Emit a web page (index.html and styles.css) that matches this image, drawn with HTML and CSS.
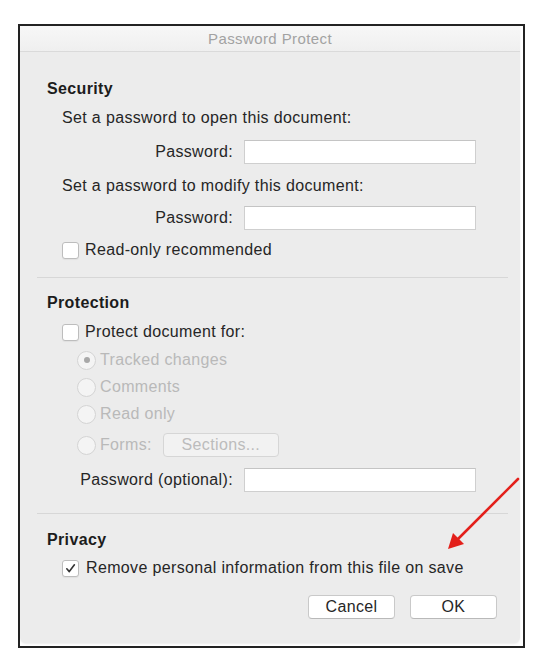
FILE: index.html
```html
<!DOCTYPE html>
<html lang="en">
<head>
  <meta charset="UTF-8">
  <meta name="viewport" content="width=device-width, initial-scale=1.0">
  <title>Password Protect</title>
  <link rel="stylesheet" href="styles.css">
</head>
<body>
  <div class="frame">
    <div class="dialog">
      <div class="titlebar">Password Protect</div>

      <div class="panel">
        <!-- Security -->
        <h2 class="heading">Security</h2>
        <div class="row indent s-open">Set a password to open this document:</div>
        <div class="field-row s-pw1">
          <span class="field-label">Password:</span>
          <span class="field"></span>
        </div>
        <div class="row indent s-modify">Set a password to modify this document:</div>
        <div class="field-row s-pw2">
          <span class="field-label">Password:</span>
          <span class="field"></span>
        </div>
        <div class="row indent s-readonly">
          <span class="checkbox"></span>
          <span class="check-text">Read-only recommended</span>
        </div>

        <div class="divider d-first"></div>

        <!-- Protection -->
        <h2 class="heading p-head">Protection</h2>
        <div class="row indent p-protect">
          <span class="checkbox"></span>
          <span class="check-text">Protect document for:</span>
        </div>
        <div class="row radio-row p-tracked">
          <span class="radio selected"></span>
          <span class="radio-text">Tracked changes</span>
        </div>
        <div class="row radio-row p-comments">
          <span class="radio"></span>
          <span class="radio-text">Comments</span>
        </div>
        <div class="row radio-row p-readonly">
          <span class="radio"></span>
          <span class="radio-text">Read only</span>
        </div>
        <div class="row radio-row forms-row">
          <span class="radio"></span>
          <span class="radio-text">Forms:</span>
          <span class="btn-disabled">Sections...</span>
        </div>
        <div class="field-row p-pw">
          <span class="field-label">Password (optional):</span>
          <span class="field"></span>
        </div>

        <div class="divider d-second"></div>

        <!-- Privacy -->
        <h2 class="heading v-head">Privacy</h2>
        <div class="row indent v-remove">
          <span class="checkbox checked">
            <svg width="11" height="11" viewBox="0 0 11 11"><path d="M1.8 5.8 L4.3 8.6 L9.4 1.8" fill="none" stroke="#333" stroke-width="1.6" stroke-linecap="round" stroke-linejoin="round"/></svg>
          </span>
          <span class="check-text remove-text">Remove personal information from this file on save</span>
        </div>

        <div class="buttons">
          <button class="btn">Cancel</button>
          <button class="btn">OK</button>
        </div>
      </div>
    </div>

    <!-- red annotation arrow drawn over the dialog -->
    <svg class="arrow" width="80" height="80" viewBox="0 0 80 80">
      <line x1="76" y1="2" x2="14" y2="64" stroke="#e3201b" stroke-width="2.6" stroke-linecap="round"/>
      <polygon points="6,72 11,56 22,67" fill="#e3201b"/>
    </svg>
  </div>
</body>
</html>
```

FILE: styles.css
```css
body {
  margin: 0;
  background: #fff;
  font-family: 'Liberation Sans', Arial, sans-serif;
  color: #262626;
}

.frame {
  position: relative;
  width: 503px;
  height: 620px;
  margin: 24px 0 0 18px;
  border: 2px solid #232323;
}

.dialog {
  height: 617px;
  margin-right: 3px;
  background: #ececec;
  border-radius: 0 0 6px 6px;
  box-shadow: 0 1px 2px rgba(0,0,0,0.08);
  display: flex;
  flex-direction: column;
}

.titlebar {
  height: 25px;
  line-height: 26px;
  text-align: center;
  font-size: 15px;
  color: #a2a2a2;
  letter-spacing: 0.4px;
  background: linear-gradient(#f7f7f7, #efefef);
  border-bottom: 1px solid #dadada;
}

.panel {
  padding: 27px 23px 0 27px;
  display: flex;
  flex-direction: column;
  font-size: 16px;
  letter-spacing: 0.35px;
}

.heading {
  margin: 0;
  height: 20px;
  line-height: 20px;
  font-size: 16px;
  font-weight: bold;
  color: #1c1c1c;
}

.row {
  height: 20px;
  line-height: 20px;
  display: flex;
  align-items: center;
}

.indent {
  padding-left: 15px;
}

.field-row {
  display: flex;
  align-items: center;
  height: 24px;
}

.field-label {
  width: 186px;
  text-align: right;
  margin-right: 11px;
}

.field {
  width: 230px;
  height: 22px;
  background: #fff;
  border: 1px solid #cfcfcf;
  border-top-color: #c4c4c4;
}

.checkbox {
  width: 15px;
  height: 15px;
  background: #fff;
  border: 1px solid #bdbdbd;
  border-radius: 3px;
  display: flex;
  align-items: center;
  justify-content: center;
  box-shadow: 0 1px 1px rgba(0,0,0,0.05);
}

.check-text {
  margin-left: 6px;
}

.remove-text {
  margin-left: 7px;
}

.radio-row {
  padding-left: 30px;
  color: #b9b9b9;
}

.radio {
  width: 19px;
  height: 19px;
  box-sizing: border-box;
  border: 1px solid #d4d4d4;
  border-radius: 50%;
  background: #f4f4f4;
  display: flex;
  align-items: center;
  justify-content: center;
}

.radio.selected::after {
  content: "";
  width: 6px;
  height: 6px;
  border-radius: 50%;
  background: #a8a8a8;
}

.radio-text {
  margin-left: 4px;
}

.forms-row {
  height: 24px;
}

.btn-disabled {
  margin-left: 11px;
  width: 114px;
  height: 22px;
  line-height: 22px;
  text-align: center;
  border: 1px solid #d6d6d6;
  border-radius: 4px;
  background: #f2f2f2;
  color: #bcbcbc;
}

.divider {
  height: 1px;
  background: #d7d7d7;
  margin-left: -10px;
  margin-right: -11px;
}

.buttons {
  margin-top: 17px;
  display: flex;
  justify-content: flex-end;
  gap: 15px;
}

.btn {
  width: 87px;
  height: 24px;
  padding: 0;
  font-family: 'Liberation Sans', Arial, sans-serif;
  font-size: 16px;
  letter-spacing: 0.35px;
  color: #262626;
  background: #fff;
  border: 1px solid #c9c9c9;
  border-bottom-color: #b9b9b9;
  border-radius: 4px;
}

/* vertical rhythm, matched to the dialog */
.s-open { margin-top: 9px; }
.s-pw1 { margin-top: 12px; }
.s-modify { margin-top: 12px; }
.s-pw2 { margin-top: 10px; }
.s-readonly { margin-top: 10px; }
.d-first { margin-top: 17px; }
.p-head { margin-top: 15px; }
.p-protect { margin-top: 9px; }
.p-tracked { margin-top: 8px; }
.p-comments { margin-top: 7px; }
.p-readonly { margin-top: 7px; }
.forms-row { margin-top: 9px; }
.p-pw { margin-top: 11px; }
.d-second { margin-top: 21px; }
.v-head { margin-top: 16px; }
.v-remove { margin-top: 8px; }

.arrow {
  position: absolute;
  left: 422px;
  top: 451px;
}
```
